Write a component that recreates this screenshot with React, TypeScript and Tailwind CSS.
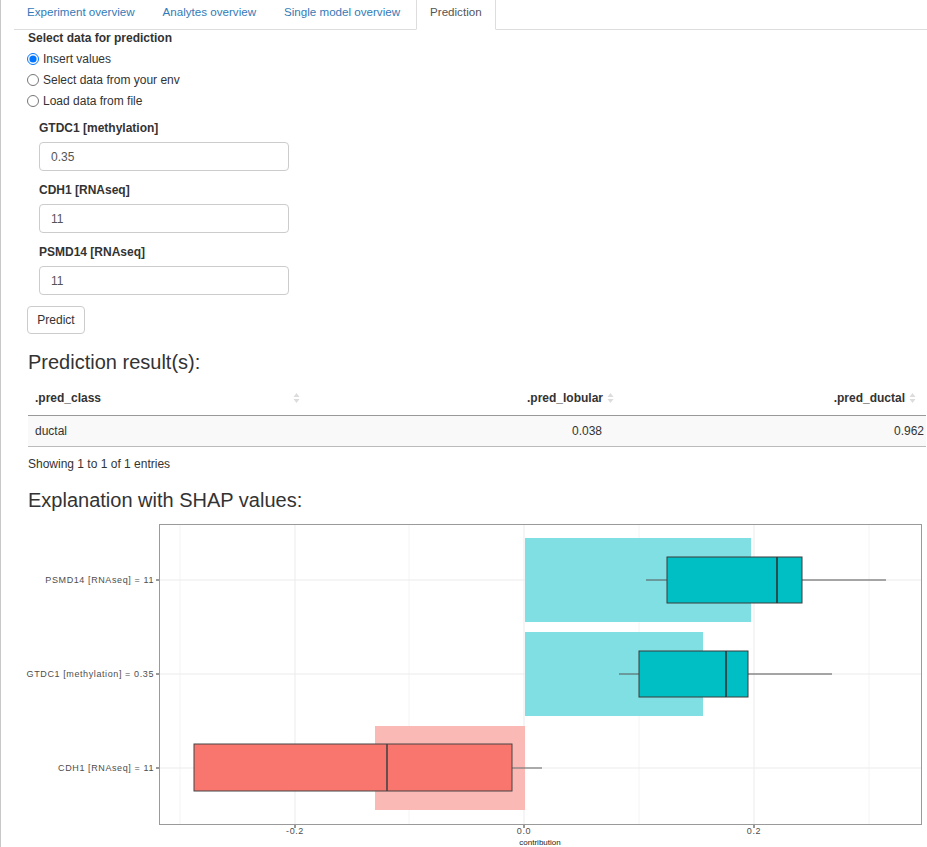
import { useState } from "react";

const tabs = ["Experiment overview", "Analytes overview", "Single model overview", "Prediction"];

const SortIcon = () => (
  <svg width="7" height="12" viewBox="0 0 7 12" className="shrink-0">
    <path d="M3.5 1 L6.5 5 L0.5 5 Z" fill="#dcdcdc" />
    <path d="M3.5 11 L6.5 7 L0.5 7 Z" fill="#dcdcdc" />
  </svg>
);

const Field = ({ label, value }: { label: string; value: string }) => (
  <div className="flex flex-col">
    <label className="font-bold text-[12px] leading-[17px] text-[#333]">{label}</label>
    <input
      readOnly
      value={value}
      className="mt-[5px] w-[250px] h-[29px] border border-[#ccc] rounded-[4px] px-[11px] text-[12px] text-[#555] outline-none"
    />
  </div>
);

const ShapChart = () => {
  const grid = "#ebebeb";
  const label = { fontSize: 9, fill: "#4d4d4d", letterSpacing: 0.6 };
  return (
    <svg width="927" height="335" viewBox="0 512 927 335" className="block">
      {/* panel */}
      <rect x="158.5" y="524.5" width="762" height="300" fill="#fff" />
      {[179, 408, 638, 868].map((x) => (
        <line key={x} x1={x} x2={x} y1={525} y2={824} stroke="#f4f4f4" strokeWidth="1" />
      ))}
      {[294, 523, 753].map((x) => (
        <line key={x} x1={x} x2={x} y1={525} y2={824} stroke={grid} strokeWidth="1" />
      ))}
      {[580, 674, 768].map((y) => (
        <line key={y} x1={159} x2={920} y1={y} y2={y} stroke={grid} strokeWidth="1" />
      ))}

      {/* mean bars */}
      <rect x="524" y="538" width="226" height="84" fill="#80dfe2" />
      <rect x="524" y="632" width="178" height="84" fill="#80dfe2" />
      <rect x="374" y="726" width="150" height="84" fill="#fbb9b5" />

      {/* PSMD14 box */}
      <line x1="645" x2="885" y1="580" y2="580" stroke="#555" strokeWidth="1" />
      <rect x="666" y="557" width="135" height="46" fill="#00bfc4" stroke="#3a3a3a" strokeWidth="1" />
      <line x1="776" x2="776" y1="557" y2="603" stroke="#333" strokeWidth="1.6" />

      {/* GTDC1 box */}
      <line x1="618" x2="831" y1="674" y2="674" stroke="#555" strokeWidth="1" />
      <rect x="638" y="651" width="109" height="46" fill="#00bfc4" stroke="#3a3a3a" strokeWidth="1" />
      <line x1="725" x2="725" y1="651" y2="697" stroke="#333" strokeWidth="1.6" />

      {/* CDH1 box */}
      <line x1="511" x2="541" y1="768" y2="768" stroke="#777" strokeWidth="1.2" />
      <rect x="193" y="744" width="318" height="47" fill="#f8766d" stroke="#444" strokeWidth="1" />
      <line x1="386" x2="386" y1="744" y2="791" stroke="#444" strokeWidth="1.6" />

      {/* panel border */}
      <rect x="158.5" y="524.5" width="762" height="300" fill="none" stroke="#9a9a9a" strokeWidth="1" />

      {/* y axis */}
      {[
        ["PSMD14 [RNAseq] = 11", 580],
        ["GTDC1 [methylation] = 0.35", 674],
        ["CDH1 [RNAseq] = 11", 768],
      ].map(([t, y]) => (
        <g key={t as string}>
          <line x1={155} x2={158} y1={y as number} y2={y as number} stroke="#333" />
          <text x={153} y={(y as number) + 3} textAnchor="end" fontFamily="Liberation Sans, Arial, sans-serif" style={label}>
            {t}
          </text>
        </g>
      ))}

      {/* x axis */}
      {[
        ["-0.2", 294],
        ["0.0", 523],
        ["0.2", 753],
      ].map(([t, x]) => (
        <g key={t as string}>
          <line x1={x as number} x2={x as number} y1={825} y2={828} stroke="#333" />
          <text x={x as number} y={834} textAnchor="middle" fontFamily="Liberation Sans, Arial, sans-serif" style={label}>
            {t}
          </text>
        </g>
      ))}
      <text x={539} y={845} textAnchor="middle" fontFamily="Liberation Sans, Arial, sans-serif" style={{ fontSize: 8, fill: "#222" }}>
        contribution
      </text>
    </svg>
  );
};

export default function App() {
  const [mode, setMode] = useState("insert");

  return (
    <div
      className="w-[927px] h-[847px] overflow-hidden bg-white border-l border-[#c8c8c8] text-[#333]"
      style={{ fontFamily: '"Liberation Sans", Arial, sans-serif' }}
    >
      {/* TABS */}
      <ul className="ml-[13px] flex h-[30px] border-b border-[#ddd] text-[11.6px]">
        {tabs.map((t) => (
          <li
            key={t}
            className={`mr-[2px] flex items-start pt-[3px] px-[13px] h-[30px] ${
              t === "Prediction"
                ? "border border-b-white border-[#ddd] border-t-0 text-[#555] bg-white ml-[1px]"
                : "text-[#337ab7]"
            }`}
          >
            {t}
          </li>
        ))}
      </ul>

      {/* FORM */}
      <div className="pl-[26px]">
        <div className="font-bold text-[12px] leading-[17px] pl-[1px]">Select data for prediction</div>
        <div className="mt-[1px] flex flex-col text-[12px]">
          {[
            ["insert", "Insert values"],
            ["env", "Select data from your env"],
            ["file", "Load data from file"],
          ].map(([k, l]) => (
            <label key={k} className="flex items-center h-[21px] gap-[5px]">
              <input
                type="radio"
                name="mode"
                checked={mode === k}
                onChange={() => setMode(k)}
                className="m-0 w-[12px] h-[12px]"
              />
              <span className="ml-[-1px]">{l}</span>
            </label>
          ))}
        </div>

        <div className="ml-[12px] mt-[9px] flex flex-col gap-[11px]">
          <Field label="GTDC1 [methylation]" value="0.35" />
          <Field label="CDH1 [RNAseq]" value="11" />
          <Field label="PSMD14 [RNAseq]" value="11" />
        </div>

        <button className="mt-[11px] h-[28px] w-[58px] border border-[#ccc] rounded-[4px] bg-white text-[12px] text-[#333]">
          Predict
        </button>

        {/* RESULTS */}
        <h3 className="mt-[17px] text-[20px] leading-[22px] pl-[1px] text-[#333]">Prediction result(s):</h3>

        <div className="mt-[8px] w-[899px] pl-[1px] text-[12px]">
          <div className="flex h-[35px] items-center border-b border-[#999] font-bold">
            <div className="w-[278px] pl-[7px] pr-[6px] flex items-center justify-between">
              <span>.pred_class</span>
              <SortIcon />
            </div>
            <div className="w-[310px] pr-[2px] flex items-center justify-end gap-[4px]">
              <span>.pred_lobular</span>
              <SortIcon />
            </div>
            <div className="flex-1 pr-[10px] flex items-center justify-end gap-[4px]">
              <span>.pred_ductal</span>
              <SortIcon />
            </div>
          </div>
          <div className="flex h-[31px] items-center bg-[#f9f9f9] border-b border-[#bbb]">
            <div className="w-[278px] pl-[7px]">ductal</div>
            <div className="w-[310px] pr-[14px] text-right">0.038</div>
            <div className="flex-1 pr-[2px] text-right">0.962</div>
          </div>
        </div>

        <div className="mt-[10px] text-[12px] leading-[15px] pl-[1px]">Showing 1 to 1 of 1 entries</div>

        <h3 className="mt-[17px] text-[20px] leading-[22px] pl-[1px] text-[#333]">Explanation with SHAP values:</h3>
      </div>

      <div className="mt-[1px]">
        <ShapChart />
      </div>
    </div>
  );
}
